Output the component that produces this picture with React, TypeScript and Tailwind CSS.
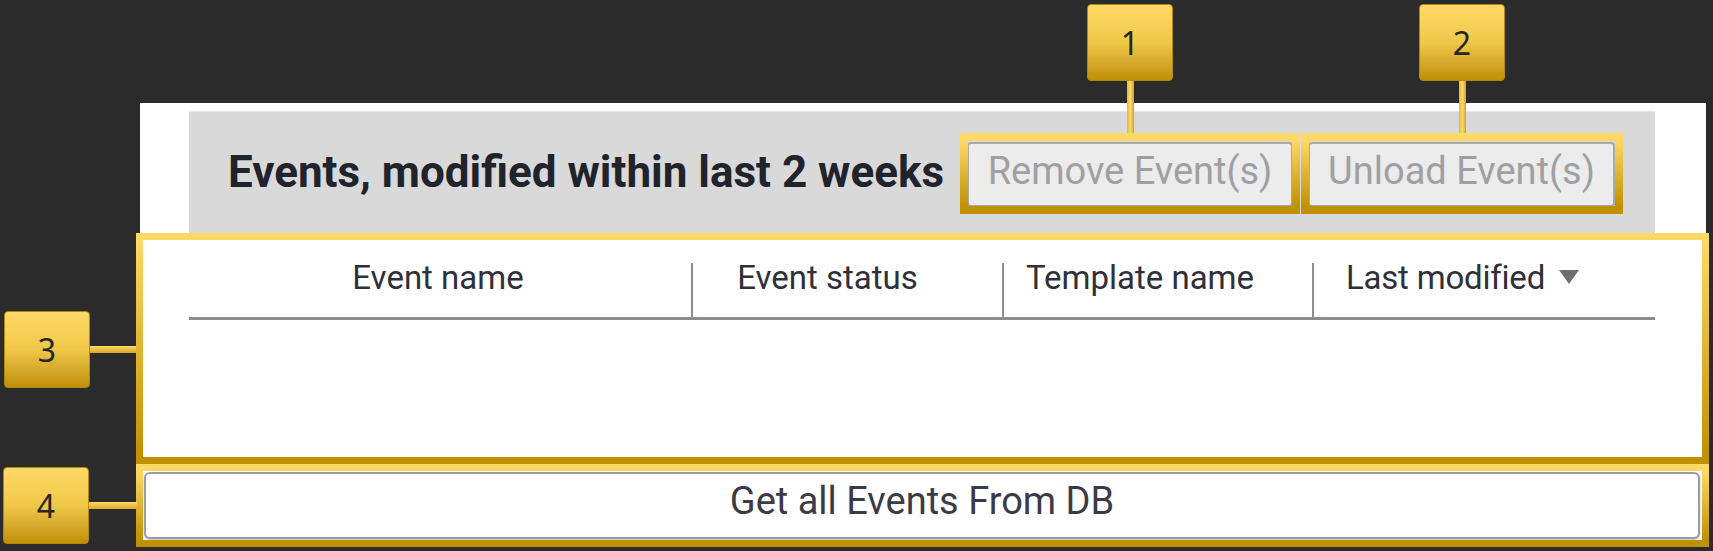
import React from "react";

const ui = "font-['Roboto','Liberation_Sans',sans-serif]";

const columns = [
  { label: "Event name", width: "w-[502px]", pad: "pr-[4px]" },
  { label: "Event status", width: "w-[309px]", pad: "pr-[40px]" },
  { label: "Template name", width: "w-[308px]", pad: "pr-[36px]" },
];

// gold annotation frame laid over the ui
const Frame = ({ className }: { className: string }) => (
  <div
    className={`absolute border-solid [border-image:linear-gradient(#ffd966,#bf9000)_1] ${className}`}
  />
);

const Badge = ({ n }: { n: string }) => (
  <div className="w-[86px] h-[77px] shrink-0 rounded-[4px] border border-[#b38a08] bg-linear-to-b from-[#ffd966] via-[#f0c848] to-[#bf9000] flex items-center justify-center text-[32px] leading-none text-[#262626] font-['Noto_Sans','Open_Sans',sans-serif]">
    {n}
  </div>
);

// numbered badge with its leader line, pointing down or right
const Callout = ({
  n,
  down,
  line,
  className,
}: {
  n: string;
  down?: boolean;
  line: string;
  className: string;
}) => (
  <div className={`absolute flex items-center ${down ? "flex-col" : "flex-row"} ${className}`}>
    <Badge n={n} />
    <div
      className={
        down
          ? `w-[7px] ${line} bg-linear-to-r from-[#e8b830] via-[#ffd966] to-[#d4a017]`
          : `h-[7px] ${line} bg-linear-to-b from-[#ffd966] to-[#d9a920]`
      }
    />
  </div>
);

export default function App() {
  return (
    <div className="relative w-[1713px] h-[551px] overflow-hidden bg-[#2b2b2b] pt-[103px] pl-[140px]">
      {/* the panel */}
      <div className={`w-[1566px] h-[444px] bg-white flex flex-col ${ui}`}>
        <div className="mt-[8px] ml-[49px] w-[1466px] h-[126px] bg-[#d9d9d9] border-t border-[#e7e7e7] flex items-center pl-[39px] pr-[40px]">
          <h1 className="mb-[6px] text-[44px] font-bold leading-none text-[#20232b] whitespace-nowrap">
            Events, modified within last 2 weeks
          </h1>
          <div className="ml-auto flex gap-[15px]">
            <button className="h-[65px] w-[326px] pb-[7px] rounded-[4px] border-2 border-[#a9a9ab] bg-[#ececec] text-[38px] leading-none text-[#a0a0a3]">
              Remove Event(s)
            </button>
            <button className="h-[65px] w-[307px] pb-[7px] rounded-[4px] border-2 border-[#a9a9ab] bg-[#ececec] text-[38px] leading-none text-[#a0a0a3]">
              Unload Event(s)
            </button>
          </div>
        </div>

        <div className="ml-[49px] w-[1466px] h-[83px] flex border-b-[3px] border-[#8c8c94] text-[33px] leading-none text-[#30303a]">
          {columns.map((c) => (
            <React.Fragment key={c.label}>
              <div className={`${c.width} ${c.pad} flex items-center justify-center`}>
                {c.label}
              </div>
              <div className="self-end w-[2px] h-[54px] bg-[#8c8c94]" />
            </React.Fragment>
          ))}
          <div className="flex-1 pr-[44px] flex items-center justify-center">
            <span className="tracking-[-0.2px]">Last modified</span>
            <svg width="20" height="14" viewBox="0 0 20 14" className="ml-[14px]">
              <polygon points="0,0 20,0 10,14" fill="#6e6e76" />
            </svg>
          </div>
        </div>

        <div className="h-[152px]" />

        <button className="ml-[4px] w-[1556px] h-[67px] pb-[9px] rounded-[6px] border-2 border-[#9c9ca4] bg-white text-[38px] leading-none text-[#3b3b47] shadow-[0_1px_2px_rgba(0,0,0,0.25)]">
          Get all Events From DB
        </button>
      </div>

      {/* callout frames */}
      <Frame className="left-[960px] top-[133px] w-[340px] h-[81px] border-[8px]" />
      <Frame className="left-[1301px] top-[133px] w-[322px] h-[81px] border-[8px]" />
      <Frame className="left-[136px] top-[233px] w-[1573px] h-[231px] border-[7px]" />
      <Frame className="left-[136px] top-[464px] w-[1573px] h-[83px] border-[7px]" />

      {/* numbered callouts */}
      <Callout n="1" down line="h-[52px]" className="left-[1087px] top-[4px]" />
      <Callout n="2" down line="h-[52px]" className="left-[1419px] top-[4px]" />
      <Callout n="3" line="w-[46px]" className="left-[4px] top-[311px]" />
      <Callout n="4" line="w-[48px]" className="left-[3px] top-[467px]" />
    </div>
  );
}
